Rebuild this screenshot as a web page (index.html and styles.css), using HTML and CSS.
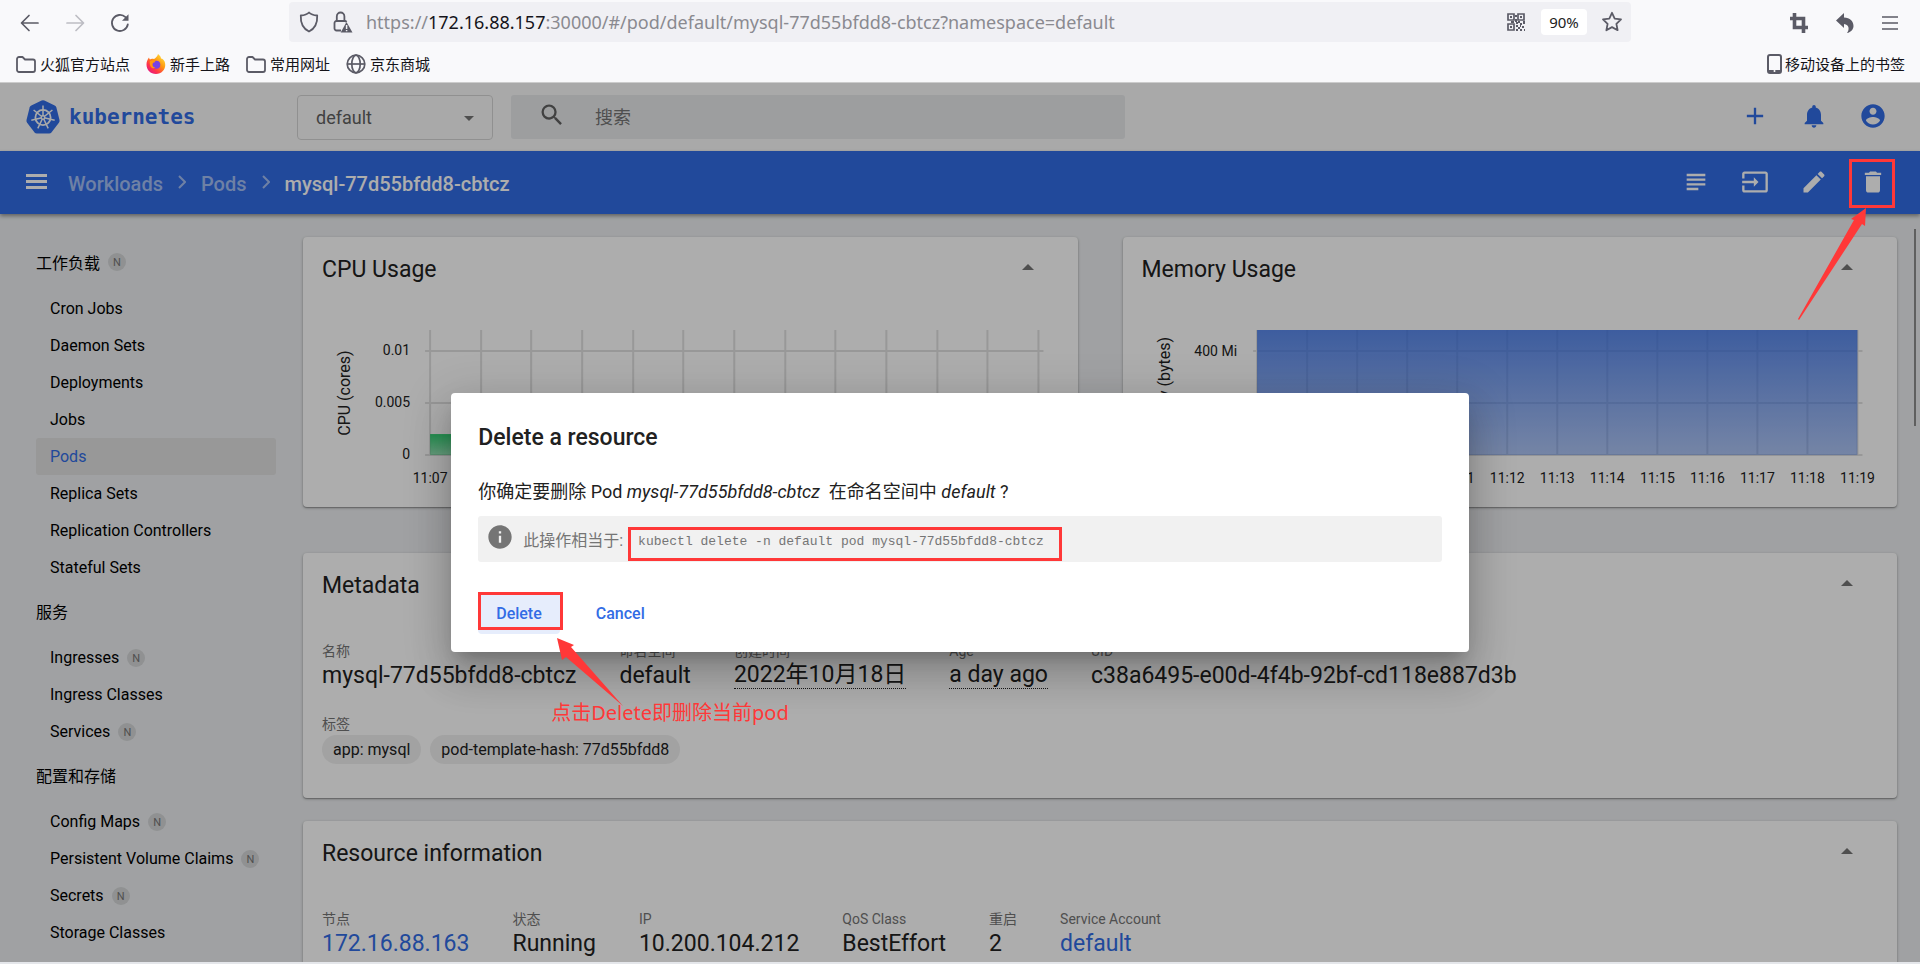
FILE: index.html
```html
<!DOCTYPE html>
<html lang="zh-CN">
<head>
<meta charset="utf-8">
<title>Kubernetes Dashboard</title>
<link rel="stylesheet" href="styles.css">
</head>
<body>
<div class="browser">
  <div class="navbar">
    <div class="nav-buttons">
      <button class="icon-btn" aria-label="Back"><svg width="20" height="20" viewBox="0 0 20 20" fill="none" stroke="#5b5b66" stroke-width="1.700" stroke-linecap="round" stroke-linejoin="round"><path d="M18 10H2M9 2.500L1.500 10L9 17.500"/></svg></button>
      <button class="icon-btn" aria-label="Forward"><svg width="20" height="20" viewBox="0 0 20 20" fill="none" stroke="#bdbdc4" stroke-width="1.700" stroke-linecap="round" stroke-linejoin="round"><path d="M2 10H18M11 2.500L18.500 10L11 17.500"/></svg></button>
      <button class="icon-btn" aria-label="Reload"><svg width="20" height="20" viewBox="0 0 20 20" fill="none" stroke="#5b5b66" stroke-width="1.800" stroke-linecap="round"><path d="M17.800 11.500A8 8 0 1 1 15.500 4.200"/><path d="M18.500 1.200V7.800H12Z" fill="#5b5b66" stroke="none"/></svg></button>
    </div>
    <div class="urlbar">
      <svg width="20" height="22" viewBox="0 0 20 22" fill="none" stroke="#5b5b66" stroke-width="1.800" stroke-linejoin="round"><path d="M10 1.500C12 3.600 15 4.300 18.200 4.500C18.600 12 16 17.500 10 20.500C4 17.500 1.400 12 1.800 4.500C5 4.300 8 3.600 10 1.500Z"/></svg>
      <svg class="lock" width="20" height="22" viewBox="0 0 20 22" fill="none" stroke="#5b5b66" stroke-width="1.800"><path d="M8 19.500H3.500A2 2 0 0 1 1.500 17.500V12A2 2 0 0 1 3.500 10H11.500A2 2 0 0 1 13.500 11"/><path d="M3.800 10V5.500A3.800 4 0 0 1 11.400 5.500V10"/><path d="M13.500 11L19.500 21.500H7.700Z" fill="#5b5b66" stroke="none"/><path d="M13.600 14V18M13.600 19V20.300" stroke="#f0f0f4" stroke-width="1.500"/></svg>
      <div class="url"><span>https://</span><b>172.16.88.157</b><span>:30000/#/pod/default/mysql-77d55bfdd8-cbtcz?namespace=default</span></div>
      <svg width="18" height="18" viewBox="0 0 18 18" fill="none" stroke="#5b5b66" stroke-width="1.700"><path d="M1 1H7V7H1ZM11 1H17V7H11ZM1 11H7V17H1Z"/><path fill="#5b5b66" stroke="none" d="M3 3h2v2H3zM13 3h2v2h-2zM3 13h2v2H3zM8 2h2v2H8zM8 6h2v3H8zM4 8h3v2H4zM9 9h2v2H9zM11 8h2v2h-2zM13 10h2v2h-2zM16 8h2v3h-2zM9 12h2v2H9zM11 14h2v2h-2zM13 12h1v2h-1zM15 13h2v2h-2zM9 16h2v2H9zM13 16h2v2h-2zM17 16h1v2h-1z"/></svg>
      <button class="zoom-level">90%</button>
      <button class="icon-btn star" aria-label="Bookmark"><svg width="22" height="22" viewBox="0 0 22 22" fill="none" stroke="#5b5b66" stroke-width="1.800" stroke-linejoin="round"><path d="M11 1.800L13.700 7.600L20 8.400L15.400 12.800L16.600 19.200L11 16.100L5.400 19.200L6.600 12.800L2 8.400L8.300 7.600Z"/></svg></button>
    </div>
    <div class="nav-tools">
      <button class="icon-btn" aria-label="Screenshot"><svg width="18" height="20" viewBox="0 0 18 20" fill="none" stroke="#5b5b66" stroke-width="3.600"><path d="M4.500 0V14.500H18M0 5.500H13.500V20"/></svg></button>
      <button class="icon-btn" aria-label="Undo"><svg width="18" height="20" viewBox="0 0 18 20" fill="#5b5b66"><path d="M8 0V4.500C14 5 17.500 8 17.500 13C17.500 16 15 19.500 11 20C13.500 17 13.500 11.500 8 11V15L0 7.500Z"/></svg></button>
      <button class="icon-btn" aria-label="Menu"><svg width="16" height="16" viewBox="0 0 16 16" stroke="#5b5b66" stroke-width="1.600"><path d="M0 2H16M0 8H16M0 14H16"/></svg></button>
    </div>
  </div>
  <div class="bookmarks">
    <a href="#"><svg width="20" height="17" viewBox="0 0 20 17" fill="none" stroke="#5b5b66" stroke-width="1.800" stroke-linejoin="round"><path d="M1 3A2 2 0 0 1 3 1H6.500L9 3.500H17A2 2 0 0 1 19 5.500V14A2 2 0 0 1 17 16H3A2 2 0 0 1 1 14Z"/></svg>火狐官方站点</a>
    <a href="#"><svg width="20" height="20" viewBox="0 0 20 20"><defs><linearGradient id="fox" x1="1" y1="0" x2="0.200" y2="1"><stop offset="0" stop-color="#fff44f"/><stop offset=".45" stop-color="#ff980e"/><stop offset=".75" stop-color="#ff3647"/><stop offset="1" stop-color="#e31587"/></linearGradient></defs><path fill="url(#fox)" d="M12 0C14 1.500 15 3 15 4.500C16.500 4.700 18 6 18.600 7.500C21 14 16.500 20 10 20C4.500 20 .5 16 .5 10.500C.5 7.500 1.500 5.500 3 3.500C3.200 4.500 3.500 5 4 5.500C5 4.500 6.500 4.500 8 5C9.500 4 11.500 2.500 12 0Z"/><circle cx="10.300" cy="10.800" r="4" fill="#7542e5"/><path fill="#ff980e" d="M4 7C6 5.500 8 6 9.500 8C8.500 8.500 7 8.500 6.500 9.800C6 12 7.500 13.500 9.500 13.800C6 15.500 3 12.500 4 7Z"/></svg>新手上路</a>
    <a href="#"><svg width="20" height="17" viewBox="0 0 20 17" fill="none" stroke="#5b5b66" stroke-width="1.800" stroke-linejoin="round"><path d="M1 3A2 2 0 0 1 3 1H6.500L9 3.500H17A2 2 0 0 1 19 5.500V14A2 2 0 0 1 17 16H3A2 2 0 0 1 1 14Z"/></svg>常用网址</a>
    <a href="#"><svg width="20" height="20" viewBox="0 0 20 20" fill="none" stroke="#5b5b66" stroke-width="1.700"><circle cx="10" cy="10" r="8.800"/><ellipse cx="10" cy="10" rx="4.200" ry="8.800"/><path d="M1 10H19"/></svg>京东商城</a>
    <a href="#" class="mobile"><svg width="15" height="20" viewBox="0 0 15 20"><rect x="1" y="1" width="13" height="18" rx="2" fill="none" stroke="#5b5b66" stroke-width="2"/><path d="M1 16H14V18.500H1Z" fill="#5b5b66"/><circle cx="7.500" cy="17" r="1" fill="#fff"/></svg>移动设备上的书签</a>
  </div>
</div>

<div class="app">
  <header class="topbar">
    <a href="#" class="logo">
      <svg width="34" height="34" viewBox="0 0 34 34"><path fill="#326ce5" d="M15.600.6Q17 0 18.400.6L28.700 5.500Q30 6.200 30.400 7.600L33.500 20Q33.800 21.500 32.900 22.700L25.600 32.300Q24.600 33.500 23.200 33.500H10.800Q9.400 33.500 8.400 32.300L1.100 22.700Q.2 21.500 .5 20L3.600 7.600Q4 6.200 5.300 5.500Z"/><g fill="none" stroke="#fafafa" stroke-width="1.800"><circle cx="17" cy="17.500" r="7.600"/><path stroke-width="1.500" d="M17 5.500V17.500L26.400 10M17 17.500L28.700 20.200M17 17.500L22.200 28.300M17 17.500L11.800 28.300M17 17.500L5.300 20.200M17 17.500L7.600 10"/></g><circle cx="17" cy="17.500" r="2.400" fill="#fafafa"/><circle cx="17" cy="17.500" r="1" fill="#326ce5"/></svg>
      <span>kubernetes</span>
    </a>
    <div class="namespace">
      <select aria-label="Namespace"><option>default</option></select>
      <svg width="10" height="5" viewBox="0 0 10 5"><path d="M0 0H10L5 5Z" fill="#757575"/></svg>
    </div>
    <label class="search">
      <svg width="28" height="28" viewBox="0 0 24 24" fill="#616161"><path d="M15.500 14h-.79l-.28-.27A6.471 6.471 0 0 0 16 9.500 6.500 6.500 0 1 0 9.500 16c1.610 0 3.090-.59 4.230-1.570l.27.28v.79l5 4.990L20.490 19l-4.990-5zm-6 0C7.010 14 5 11.990 5 9.500S7.010 5 9.500 5 14 7.010 14 9.500 11.990 14 9.500 14z"/></svg>
      <input type="text" placeholder="搜索" aria-label="搜索">
    </label>
    <div class="actions">
      <button aria-label="Create"><svg viewBox="0 0 24 24"><path d="M19 13h-6v6h-2v-6H5v-2h6V5h2v6h6v2z"/></svg></button>
      <button aria-label="Notifications"><svg viewBox="0 0 24 24"><path d="M12 22c1.100 0 2-.9 2-2h-4c0 1.100.89 2 2 2zm6-6v-5c0-3.070-1.640-5.640-4.500-6.320V4c0-.83-.67-1.500-1.500-1.500s-1.500.67-1.500 1.500v.68C7.630 5.360 6 7.920 6 11v5l-2 2v1h16v-1l-2-2z"/></svg></button>
      <button aria-label="Account"><svg viewBox="0 0 24 24"><path d="M12 2C6.480 2 2 6.480 2 12s4.480 10 10 10 10-4.480 10-10S17.520 2 12 2zm0 3c1.660 0 3 1.340 3 3s-1.340 3-3 3-3-1.340-3-3 1.340-3 3-3zm0 14.200c-2.500 0-4.710-1.280-6-3.220.03-1.990 4-3.080 6-3.080 1.990 0 5.970 1.090 6 3.080-1.290 1.940-3.500 3.220-6 3.220z"/></svg></button>
    </div>
  </header>

  <div class="crumbbar">
    <button class="hamburger" aria-label="Toggle menu"><svg width="22" height="16" viewBox="0 0 22 16" fill="#fff"><path d="M0 0H21V3H0ZM0 6H21V9H0ZM0 12H21V15H0Z"/></svg></button>
    <nav class="crumbs" aria-label="Breadcrumb">
      <a href="#">Workloads</a>
      <svg width="8" height="14" viewBox="0 0 8 14" fill="none" stroke="#a3bef3" stroke-width="2"><path d="M1 1L7 7L1 13"/></svg>
      <a href="#">Pods</a>
      <svg width="8" height="14" viewBox="0 0 8 14" fill="none" stroke="#a3bef3" stroke-width="2"><path d="M1 1L7 7L1 13"/></svg>
      <span>mysql-77d55bfdd8-cbtcz</span>
    </nav>
    <div class="actions">
      <button aria-label="Logs"><svg viewBox="0 0 24 24"><path d="M14 17H4v2h10v-2zm6-8H4v2h16V9zM4 15h16v-2H4v2zM4 5v2h16V5H4z"/></svg></button>
      <button aria-label="Exec"><svg viewBox="0 0 24 24"><path d="M21 3.010H3c-1.100 0-2 .9-2 2V9h2V4.990h18v14.030H3V15H1v4.010c0 1.100.9 1.980 2 1.980h18c1.100 0 2-.88 2-1.980v-14c0-1.110-.9-2-2-2zM11 16l4-4-4-4v3H1v2h10v3z"/></svg></button>
      <button aria-label="Edit"><svg viewBox="0 0 24 24"><path d="M3 17.250V21h3.750L17.810 9.940l-3.750-3.750L3 17.250zM20.710 7.040c.39-.39.39-1.020 0-1.410l-2.340-2.340c-.39-.39-1.020-.39-1.410 0l-1.830 1.830 3.750 3.750 1.830-1.830z"/></svg></button>
      <button aria-label="Delete"><svg viewBox="0 0 24 24"><path d="M6 19c0 1.100.9 2 2 2h8c1.100 0 2-.9 2-2V7H6v12zM19 4h-3.500l-1-1h-5l-1 1H5v2h14V4z"/></svg></button>
    </div>
  </div>

  <div class="body">
    <nav class="sidebar" aria-label="Resources">
      <h2>工作负载 <i>N</i></h2>
      <ul>
        <li><a href="#">Cron Jobs</a></li>
        <li><a href="#">Daemon Sets</a></li>
        <li><a href="#">Deployments</a></li>
        <li><a href="#">Jobs</a></li>
        <li><a href="#" class="active">Pods</a></li>
        <li><a href="#">Replica Sets</a></li>
        <li><a href="#">Replication Controllers</a></li>
        <li><a href="#">Stateful Sets</a></li>
      </ul>
      <h2>服务</h2>
      <ul>
        <li><a href="#">Ingresses <i>N</i></a></li>
        <li><a href="#">Ingress Classes</a></li>
        <li><a href="#">Services <i>N</i></a></li>
      </ul>
      <h2>配置和存储</h2>
      <ul>
        <li><a href="#">Config Maps <i>N</i></a></li>
        <li><a href="#">Persistent Volume Claims <i>N</i></a></li>
        <li><a href="#">Secrets <i>N</i></a></li>
        <li><a href="#">Storage Classes</a></li>
      </ul>
    </nav>

    <main class="content">
      <div class="charts">
        <section class="card">
          <div class="card-head"><h3>CPU Usage</h3><button aria-label="Collapse"><svg width="12" height="6" viewBox="0 0 12 6"><path d="M0 6H12L6 0Z"/></svg></button></div>
          <svg class="chart" viewBox="0 0 774 190" role="img" aria-label="CPU usage chart">
            <defs><linearGradient id="cpu" x1="0" y1="0" x2="0" y2="1"><stop offset="0" stop-color="#00c752" stop-opacity=".8"/><stop offset="1" stop-color="#00c752" stop-opacity=".4"/></linearGradient></defs>
            <path class="grid" d="M127 14V139M178 14V139M228 14V139M279 14V139M330 14V139M380 14V139M431 14V139M482 14V139M532 14V139M583 14V139M634 14V139M684 14V139M735 14V139M122 35H740M122 87H740M122 139H740"/>
            <rect x="127" y="118" width="608" height="21" fill="url(#cpu)"/>
            <g class="y-labels"><text x="107" y="39">0.01</text><text x="107" y="91">0.005</text><text x="107" y="143">0</text></g>
            <g class="x-labels"><text x="127" y="167">11:07</text></g>
            <text class="axis" transform="translate(47 77) rotate(-90)">CPU (cores)</text>
          </svg>
        </section>
        <section class="card">
          <div class="card-head"><h3>Memory Usage</h3><button aria-label="Collapse"><svg width="12" height="6" viewBox="0 0 12 6"><path d="M0 6H12L6 0Z"/></svg></button></div>
          <svg class="chart" viewBox="0 0 774 190" role="img" aria-label="Memory usage chart">
            <defs><linearGradient id="mem" x1="0" y1="0" x2="0" y2="1"><stop offset="0" stop-color="#326ce5" stop-opacity=".8"/><stop offset="1" stop-color="#326ce5" stop-opacity=".4"/></linearGradient></defs>
            <path class="grid" d="M134 14V139M184 14V139M234 14V139M284 14V139M334 14V139M384 14V139M434 14V139M484 14V139M534 14V139M584 14V139M634 14V139M684 14V139M734 14V139M130 35H739M130 87H739M130 139H739"/>
            <rect x="134" y="14" width="600" height="125" fill="url(#mem)"/>
            <g class="y-labels"><text x="114" y="40">400 Mi</text></g>
            <g class="x-labels"><text x="334" y="167">11:11</text><text x="384" y="167">11:12</text><text x="434" y="167">11:13</text><text x="484" y="167">11:14</text><text x="534" y="167">11:15</text><text x="584" y="167">11:16</text><text x="634" y="167">11:17</text><text x="684" y="167">11:18</text><text x="734" y="167">11:19</text></g>
            <text class="axis" transform="translate(47 77) rotate(-90)">Memory (bytes)</text>
          </svg>
        </section>
      </div>

      <section class="card details metadata">
        <div class="card-head"><h3>Metadata</h3><button aria-label="Collapse"><svg width="12" height="6" viewBox="0 0 12 6"><path d="M0 6H12L6 0Z"/></svg></button></div>
        <dl class="props">
          <div><dt>名称</dt><dd>mysql-77d55bfdd8-cbtcz</dd></div>
          <div><dt>命名空间</dt><dd>default</dd></div>
          <div><dt>创建时间</dt><dd><span class="dotted">2022年10月18日</span></dd></div>
          <div><dt>Age</dt><dd><span class="dotted">a day ago</span></dd></div>
          <div><dt>UID</dt><dd>c38a6495-e00d-4f4b-92bf-cd118e887d3b</dd></div>
        </dl>
        <div class="labels">
          <div class="label-title">标签</div>
          <div class="chips"><span>app: mysql</span><span>pod-template-hash: 77d55bfdd8</span></div>
        </div>
      </section>

      <section class="card details">
        <div class="card-head"><h3>Resource information</h3><button aria-label="Collapse"><svg width="12" height="6" viewBox="0 0 12 6"><path d="M0 6H12L6 0Z"/></svg></button></div>
        <dl class="props">
          <div><dt>节点</dt><dd><a href="#">172.16.88.163</a></dd></div>
          <div><dt>状态</dt><dd>Running</dd></div>
          <div><dt>IP</dt><dd>10.200.104.212</dd></div>
          <div><dt>QoS Class</dt><dd>BestEffort</dd></div>
          <div><dt>重启</dt><dd>2</dd></div>
          <div><dt>Service Account</dt><dd><a href="#">default</a></dd></div>
        </dl>
      </section>
    </main>
    <div class="scrollbar"></div>
  </div>

  <div class="backdrop">
    <div class="dialog" role="dialog" aria-modal="true" aria-labelledby="dialog-title">
      <h1 id="dialog-title">Delete a resource</h1>
      <p>你确定要删除 Pod <em>mysql-77d55bfdd8-cbtcz</em>&nbsp; 在命名空间中 <em>default</em> ?</p>
      <div class="equivalent">
        <svg width="28" height="28" viewBox="0 0 24 24" fill="#757575"><path d="M12 2C6.480 2 2 6.480 2 12s4.480 10 10 10 10-4.480 10-10S17.520 2 12 2zm1 15h-2v-6h2v6zm0-8h-2V7h2v2z"/></svg>
        <span>此操作相当于:</span>
        <code class="marked">kubectl delete -n default pod mysql-77d55bfdd8-cbtcz</code>
      </div>
      <div class="dialog-actions">
        <button class="confirm">Delete</button>
        <button>Cancel</button>
      </div>
      <svg class="arrow-confirm" width="66" height="68" viewBox="0 0 66 68" fill="#ff3838"><path d="M0 0L17 7L14 9L66 68L9 19L5 22Z"/></svg>
      <div class="note">点击Delete即删除当前pod</div>
    </div>
  </div>
  <div class="mark-trash"></div>
  <svg class="arrow-trash" width="70" height="112" viewBox="0 0 70 112" fill="#ff3838"><path d="M68 0L67 18L64 16L1 112L0 111L56 12L53 11Z"/></svg>
</div>
<div class="desktop-edge"></div>
</body>
</html>
```

FILE: styles.css
```css
* { box-sizing: border-box; }

body {
  margin: 0;
  height: 100vh;
  display: flex;
  flex-direction: column;
  overflow: hidden;
  font-family: Roboto, "Noto Sans CJK SC", sans-serif;
  font-size: 16px;
  color: #212121;
}

h1, h2, h3, p, ul, dl, dd { margin: 0; padding: 0; }
ul { list-style: none; }
a { color: inherit; text-decoration: none; }
button { border: 0; padding: 0; background: none; font: inherit; color: inherit; }
svg { display: block; flex: none; }

/* Browser chrome */
.browser {
  flex: none;
  background: #f9f9fb;
  border-bottom: 1px solid #ccc;
  font-family: "Noto Sans", "Noto Sans CJK SC", sans-serif;
}
.navbar { display: flex; height: 44px; padding-top: 2px; }
.nav-buttons { flex: none; width: 289px; display: flex; align-items: center; gap: 25px; padding-left: 20px; }
.icon-btn { display: flex; align-items: center; }
.urlbar {
  flex: 1;
  height: 40px;
  display: flex;
  align-items: center;
  padding: 0 8px 0 10px;
  border-radius: 4px;
  background: #f0f0f4;
}
.lock { margin-left: 14px; }
.url { flex: 1; margin-left: 13px; font-size: 18px; color: #8a8a90; white-space: nowrap; }
.url b { font-weight: 400; color: #15141a; }
.zoom-level { width: 46px; height: 26px; margin: 0 14px 0 16px; border-radius: 4px; background: #fff; font-size: 15px; line-height: 26px; }
.nav-tools { flex: none; width: 289px; display: flex; align-items: center; justify-content: flex-end; gap: 28px; padding-right: 22px; }
.bookmarks {
  display: flex;
  align-items: center;
  gap: 16px;
  height: 38px;
  padding: 2px 15px 0 16px;
  font-size: 15px;
  color: #15141a;
}
.bookmarks a { display: flex; align-items: center; gap: 4px; line-height: 20px; }
.bookmarks .mobile { margin-left: auto; gap: 3px; }

/* Dashboard shell */
.app { position: relative; flex: 1; min-height: 0; display: flex; flex-direction: column; background: #eceef0; }
.topbar { flex: none; display: flex; align-items: center; height: 68px; padding: 0 33px 0 26px; background: #fafafa; }
.logo { flex: none; width: 271px; display: flex; align-items: center; gap: 9px; color: #326ce5; font: bold 21px/34px "DejaVu Sans Mono", monospace; }
.namespace { position: relative; flex: none; width: 196px; height: 45px; }
.namespace select {
  appearance: none;
  width: 100%;
  height: 100%;
  padding: 0 18px;
  border: 1px solid #d5d5d5;
  border-radius: 4px;
  background: transparent;
  font: inherit;
  font-size: 18px;
  color: #616161;
}
.namespace svg { position: absolute; right: 19px; top: 21px; }
.search { flex: none; width: 33%; height: 44px; margin-left: 18px; display: flex; align-items: center; padding-left: 27px; gap: 29px; border-radius: 3px; background: #e7e9eb; }
.search svg { margin-bottom: 4px; }
.search input { flex: 1; min-width: 0; border: 0; padding: 0; background: none; font: inherit; font-size: 18px; }
.search input::placeholder { color: #757575; opacity: 1; }
.actions { margin-left: auto; display: flex; align-items: center; gap: 31px; fill: currentColor; }
.actions svg { width: 28px; height: 28px; }
.topbar .actions { color: #326ce5; padding-bottom: 2px; }

.crumbbar { position: relative; flex: none; display: flex; align-items: center; height: 63px; padding: 0 33px 0 26px; background: #326ce5; color: #fff; box-shadow: 0 2px 4px rgba(0, 0, 0, .4); }
.hamburger, .crumbbar .actions { padding-bottom: 2px; }
.crumbs { display: flex; align-items: center; gap: 15px; margin-left: 20px; font-size: 20px; font-weight: 500; line-height: 24px; }
.crumbs a, .crumbs span { padding-top: 2px; }
.crumbs svg { margin-bottom: 2px; }
.crumbs a { color: #a3bef3; }

.body { position: relative; flex: 1; min-height: 0; display: flex; overflow: hidden; }

/* Sidebar */
.sidebar { flex: none; width: 303px; padding: 23px 27px 0 36px; color: #000; }
.sidebar h2 { display: flex; align-items: center; gap: 8px; height: 50px; font-size: 16px; font-weight: 400; }
.sidebar ul { padding-top: 3px; }
.sidebar a { display: flex; align-items: center; gap: 8px; height: 37px; padding-left: 14px; border-radius: 3px; }
.sidebar .active { background: #e0e0e0; color: #326ce5; }
.sidebar i { width: 18px; height: 18px; border-radius: 9px; background: #d4d6d8; color: #757575; font-size: 11px; font-style: normal; line-height: 19px; text-align: center; }

/* Cards */
.content { flex: 1; min-width: 0; padding: 23px 23px 0 0; }
.charts { display: grid; grid-template-columns: 1fr 1fr; gap: 45px; margin-bottom: 46px; }
.card { border-radius: 4px; background: #fff; box-shadow: 0 1px 3px rgba(0, 0, 0, .3), 0 1px 1px rgba(0, 0, 0, .2); }
.card-head { display: flex; align-items: center; justify-content: space-between; height: 64px; padding: 0 44px 0 19px; }
.card-head h3 { font-size: 23px; font-weight: 400; }
.card-head button { padding-bottom: 4px; fill: #757575; }
.chart { width: 100%; height: auto; margin: 15px 0 0; }
.charts .card { height: 270px; }
.grid { fill: none; stroke: #e0e0e0; stroke-width: 2; }
.y-labels, .x-labels { font-size: 14px; fill: #212121; }
.y-labels { text-anchor: end; }
.x-labels, .axis { text-anchor: middle; }
.axis { font-size: 16px; fill: #212121; }

.details { padding-bottom: 34px; margin-bottom: 23px; }
.props { display: flex; gap: 43px; padding: 23px 19px 0; }
.props dt, .label-title { font-size: 14px; line-height: 22px; color: #757575; }
.props dd { font-size: 23px; line-height: 28px; white-space: nowrap; }
.props a { color: #326ce5; }
.dotted { display: block; line-height: 26px; border-bottom: 1px dotted #212121; }
.labels { padding: 23px 19px 0; }
.chips { display: flex; gap: 9px; }
.chips span { height: 29px; padding: 0 11px; border-radius: 15px; background: #efefef; line-height: 29px; }

.scrollbar { position: absolute; right: 4px; top: 15px; width: 2px; height: 197px; background: #8c8c8c; }

/* Dialog */
.backdrop { position: absolute; inset: 0; display: flex; align-items: center; justify-content: center; background: rgba(0, 0, 0, .32); }
.dialog {
  position: relative;
  width: 53%;
  padding: 27px;
  border-radius: 4px;
  background: #fff;
  box-shadow: 0 11px 15px -7px rgba(0, 0, 0, .2), 0 24px 38px 3px rgba(0, 0, 0, .14), 0 9px 46px 8px rgba(0, 0, 0, .12);
}
.dialog h1 { font-size: 23px; font-weight: 500; line-height: 36px; }
.dialog p { margin: 23px 0 11px; font-size: 18px; line-height: 26px; }
.equivalent { display: flex; align-items: center; height: 46px; padding-left: 8px; border-radius: 3px; background: #f1f1f1; color: #757575; }
.equivalent svg { margin: 0 9px 4px 0; }
.marked {
  height: 34px;
  margin: 9px 0 0 5px;
  padding: 0 15px 0 7px;
  border: 3px solid #ff3838;
  font: 13px/24px "Liberation Mono", monospace;
  white-space: nowrap;
}
.dialog-actions { display: flex; gap: 18px; margin: 30px 0 -9px; color: #326ce5; font-weight: 500; }
.dialog-actions button { height: 42px; padding: 0 18px; }
.confirm { position: relative; border-radius: 4px; background: #e6edfc; }
.confirm::after { content: ""; position: absolute; inset: 0 -3px 4px 0; border: 3px solid #ff3838; }
.note { position: absolute; left: 100px; top: 306px; color: #ff3838; font: 20px/28px "Noto Sans", "Noto Sans CJK SC", sans-serif; white-space: nowrap; }
.arrow-confirm { position: absolute; left: 106px; top: 245px; }
.mark-trash { position: absolute; right: 25px; top: 76px; width: 46px; height: 49px; border: 3px solid #ff3838; }
.arrow-trash { position: absolute; right: 52px; top: 125px; }

.desktop-edge { flex: none; height: 2px; background: #e4e6ea; }
```
